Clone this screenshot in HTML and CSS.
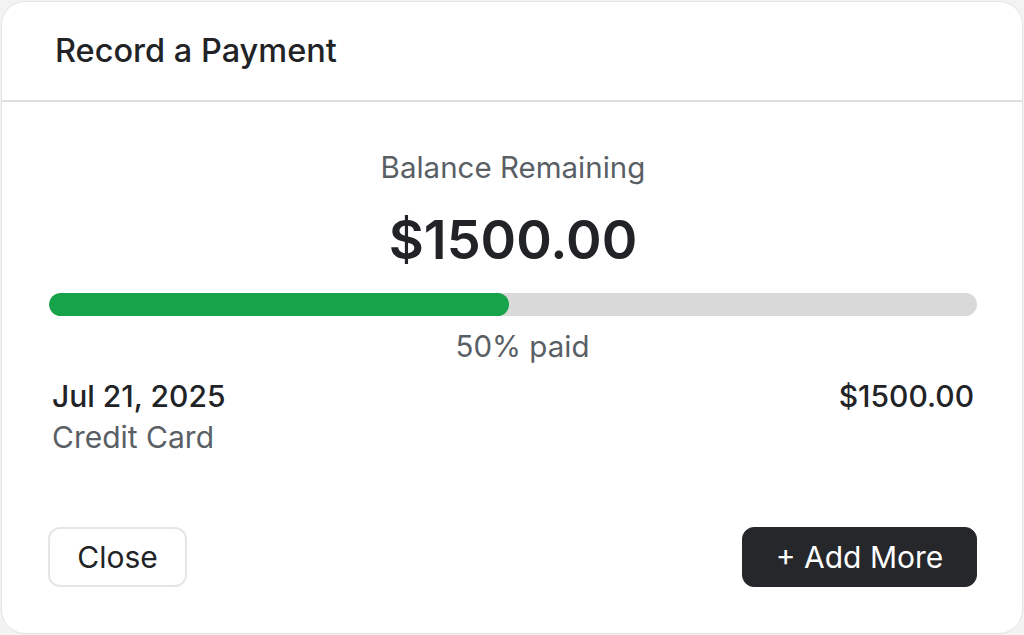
FILE: index.html
```html
<!DOCTYPE html>
<html lang="en">
<head>
<meta charset="utf-8">
<title>Record a Payment</title>
<link rel="stylesheet" href="styles.css">
</head>
<body>
<div class="card">
  <div class="card-header">
    <h1 class="title">Record a Payment</h1>
  </div>
  <div class="card-body">
    <div class="balance-label">Balance Remaining</div>
    <div class="balance-amount">$1500.00</div>
    <div class="progress">
      <div class="progress-fill" style="width: 49.6%"></div>
    </div>
    <div class="progress-label">50% paid</div>
    <div class="payment-row">
      <div class="payment-info">
        <div class="payment-date">Jul 21, 2025</div>
        <div class="payment-method">Credit Card</div>
      </div>
      <div class="payment-amount">$1500.00</div>
    </div>
    <div class="card-footer">
      <button class="btn btn-outline">Close</button>
      <button class="btn btn-dark">+ Add More</button>
    </div>
  </div>
</div>
</body>
</html>
```
FILE: styles.css
```css
* { box-sizing: border-box; }
html, body { height: 100%; }
body {
  margin: 0;
  padding: 1px;
  background: #f3f3f3;
  font-family: Inter, "Noto Sans", "Liberation Sans", sans-serif;
  color: #222326;
}
.card {
  height: 633px;
  background: #ffffff;
  border: 1px solid #e4e4e4;
  border-radius: 24px;
  display: flex;
  flex-direction: column;
  overflow: hidden;
}
.card-header {
  height: 100px;
  flex: none;
  border-bottom: 2px solid #e0e0e0;
  display: flex;
  align-items: center;
  padding-left: 53px;
}
.title {
  margin: 0;
  font-size: 32.5px;
  font-weight: 500;
  line-height: 40px;
  color: #222326;
}
.card-body {
  flex: 1;
  display: flex;
  flex-direction: column;
  padding: 0 45px 46px 47px;
}
.balance-label {
  margin-top: 49px;
  text-align: center;
  font-size: 29.5px;
  line-height: 32px;
  color: #5a5f66;
}
.balance-amount {
  margin-top: 29px;
  text-align: center;
  font-size: 54px;
  line-height: 56px;
  font-weight: 600;
  color: #222326;
}
.progress {
  margin-top: 25px;
  height: 23px;
  border-radius: 12px;
  background: #d9d9d9;
  overflow: hidden;
}
.progress-fill {
  height: 100%;
  background: #17a34a;
  border-radius: 12px;
}
.progress-label {
  margin-top: 14px;
  padding-left: 19px;
  text-align: center;
  font-size: 29.5px;
  line-height: 32px;
  color: #5a5f66;
}
.payment-row {
  margin-top: 17px;
  display: flex;
  justify-content: space-between;
  align-items: flex-start;
}
.payment-info {
  display: flex;
  flex-direction: column;
  gap: 7px;
  padding-left: 3px;
}
.payment-date {
  font-size: 30px;
  line-height: 34px;
  font-weight: 500;
  color: #222326;
}
.payment-method {
  font-size: 30px;
  line-height: 34px;
  color: #5a5f66;
}
.payment-amount {
  font-size: 30px;
  line-height: 34px;
  font-weight: 500;
  color: #222326;
  padding-right: 3px;
}
.card-footer {
  margin-top: auto;
  display: flex;
  justify-content: space-between;
  align-items: center;
}
.btn {
  height: 60px;
  border-radius: 12px;
  font-family: inherit;
  font-size: 30px;
  line-height: 1;
  cursor: pointer;
  display: inline-flex;
  align-items: center;
  justify-content: center;
}
.btn-outline {
  width: 139px;
  margin-left: -1px;
  background: #ffffff;
  border: 2px solid #e6e6e6;
  color: #222326;
}
.btn-dark {
  width: 235px;
  background: #26272b;
  border: 1px solid #26272b;
  color: #ffffff;
}
```
